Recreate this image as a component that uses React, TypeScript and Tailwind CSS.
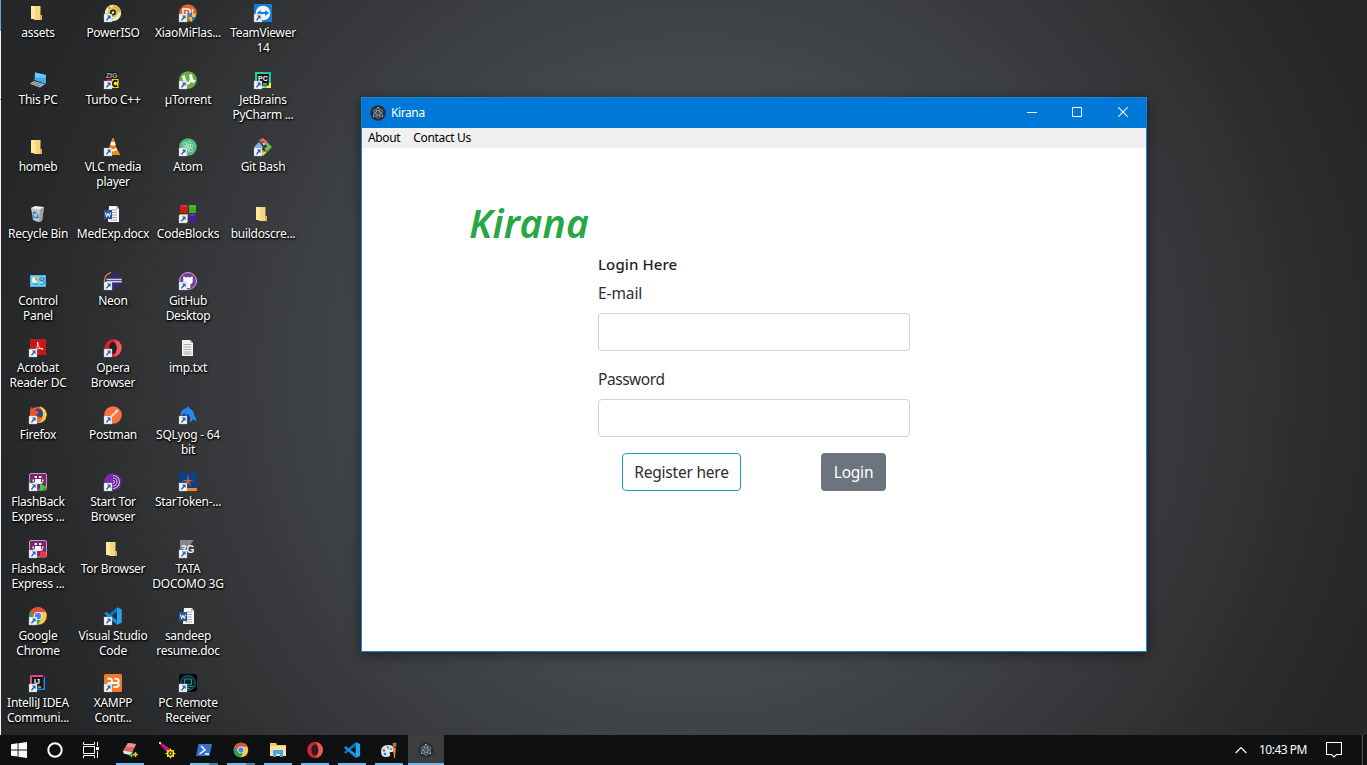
import React from "react";

const FONT = "font-['Noto_Sans','Open_Sans',sans-serif]";

function Svg({ children, size = 18 }: { children?: React.ReactNode; size?: number }) {
  return (
    <svg width={size} height={size} viewBox="0 0 18 18" className="block shrink-0 overflow-visible">
      {children}
    </svg>
  );
}

const Shortcut = () => (
  <g>
    <rect x="0" y="10" width="8" height="8" fill="#f4f6f8" stroke="#9aa4ad" strokeWidth=".4" />
    <path d="M2.9 11.6h3.7v3.7L5.4 14.1 3 16.8 1.9 15.9 4.2 13z" fill="#2b62ad" />
  </g>
);

const Folder = () => (
  <g>
    <path d="M2 2h5v13H2z" fill="#e9c05c" />
    <path d="M7 2h4.5v9l1.5.5V16H6z" fill="#f5d67d" />
    <path d="M2 2h4.5v14L2 14.6z" fill="#ffe8a2" />
    <path d="M11 11h2v5h-2z" fill="#dcb258" />
  </g>
);

const ChromeGlyph = () => (
  <g>
    <circle cx="9" cy="9" r="8.8" fill="#fbc941" />
    <path d="M1.4 4.6A8.8 8.8 0 0 0 8.6 17.8L12.5 11 9 9 5.4 11z" fill="#21a05a" />
    <path d="M1.4 4.6a8.8 8.8 0 0 1 15.4.4H9a4 4 0 0 0-3.9 4.6z" fill="#dc4e41" />
    <circle cx="9" cy="9" r="4.1" fill="#f5f7f8" />
    <circle cx="9" cy="9" r="3.2" fill="#4587ed" />
  </g>
);

const OperaGlyph = () => (
  <g>
    <ellipse cx="9" cy="9" rx="8.4" ry="8.7" fill="#e0202f" />
    <path d="M9 .3a8.7 8.7 0 0 1 0 17.4c5-1.5 5-15.9 0-17.4z" fill="#ef5a5f" />
    <ellipse cx="8.8" cy="9" rx="3.8" ry="6.1" fill="#202224" />
  </g>
);

const CodeGlyph = () => (
  <g>
    <path d="M13 .2 17.8 2.4v13.2L13 17.8z" fill="#27a4ef" />
    <path d="M13 .2v4.6L2.3 13.2.3 11.4z" fill="#0d75bb" />
    <path d="M13 17.8v-4.6L2.3 4.8.3 6.6z" fill="#1590dc" />
  </g>
);

const ElectronGlyph = () => (
  <g>
    <circle cx="9" cy="9" r="8.8" fill="#2b2e3a" />
    <g fill="none" stroke="#8eb1bb" strokeWidth=".7">
      <ellipse cx="9" cy="9" rx="2.3" ry="5.9" />
      <ellipse cx="9" cy="9" rx="2.3" ry="5.9" transform="rotate(60 9 9)" />
      <ellipse cx="9" cy="9" rx="2.3" ry="5.9" transform="rotate(120 9 9)" />
    </g>
    <g fill="#a9c9d1">
      <circle cx="9" cy="9" r=".7" />
      <circle cx="9" cy="3" r=".8" />
      <circle cx="4" cy="12.5" r=".8" />
      <circle cx="14" cy="12.5" r=".8" />
    </g>
  </g>
);

const WordGlyph = () => (
  <g>
    <path d="M5 1h8l2 3v13H4z" fill="#f8f8f8" />
    <path d="m12 1 3 3h-3z" fill="#b9bdc1" />
    <path d="M8 5h5M8 7.5h5M8 10h5M8 12.5h5M6 15h7" stroke="#9aa3af" strokeWidth=".9" />
    <rect x="0" y="5" width="8" height="9" fill="#2a579a" />
    <path d="m1.5 7.5 1.1 4.2L4 8.2l1.3 3.500 1.2-4.2" fill="none" stroke="#fff" strokeWidth="1" />
  </g>
);

const FlashGlyph = () => (
  <g>
    <rect x=".5" y=".5" width="17" height="16.5" rx="1.5" fill="#7b246f" stroke="#d8bfd5" strokeWidth=".8" />
    <rect x="5.6" y="3" width="2.4" height="2" fill="#fff" />
    <rect x="10" y="3" width="2.4" height="2" fill="#fff" />
    <path d="M6 6h6v5H6zM3.5 6.5H5v2H3.5zM13 6.5h1.5v2H13zM4.5 9h9v1.6h-9z" fill="#fff" />
  </g>
);

const icons: Record<string, React.ReactNode> = {
  folder: <Folder />,
  iso: (
    <g>
      <circle cx="9" cy="9" r="8.2" fill="#eee8cf" />
      <path d="M9 .8A8.2 8.2 0 0 1 17 8l-5 1-3-4z" fill="#d9b83c" />
      <path d="M4 2.5 8 6.5" stroke="#c3a12b" strokeWidth="2" />
      <circle cx="9" cy="8.5" r="5" fill="#e1c445" />
      <circle cx="9" cy="8.5" r="3" fill="#1c1c1b" />
      <circle cx="9" cy="8.5" r="1.3" fill="#fbf6dc" />
    </g>
  ),
  mi: (
    <g>
      <circle cx="9" cy="9" r="8.7" fill="#df6434" />
      <path d="M4 12V5h5q2 0 2 2v5M7.5 7v5M13.5 5v7" fill="none" stroke="#fff" strokeWidth="1.4" />
      <path d="M9 9.5q2.5 0 4-1.3 1.8 1.3 4 1.3 0 6-4 8.5-4-2.5-4-8.5" fill="#287fc1" />
      <path d="M13 8.2q1.8 1.3 4 1.3 0 1.8-.5 3.5H13zM9.5 13H13v5q-2.8-1.8-3.5-5" fill="#f5bf38" />
    </g>
  ),
  team: (
    <g>
      <rect width="18" height="18" fill="#137cdb" />
      <circle cx="9" cy="9" r="7.3" fill="#f4f8fc" />
      <path d="m2.8 9 4-3v2h4.4V6l4 3-4 3v-2H6.8v2z" fill="#137cdb" />
    </g>
  ),
  pc: (
    <g>
      <path d="m6 1.5 11 2.6v9L5.5 9z" fill="#44a9ed" />
      <path d="m6 1.5 11 2.6-.5 3L6 6.5z" fill="#70c4f7" />
      <path d="m5 10 11 3.2-5 3.3L.8 12.8z" fill="#aeb9c1" />
      <path d="m4.5 11 8 2.8M3 12.2l8 2.8" stroke="#69747b" strokeWidth=".8" />
    </g>
  ),
  turbo: (
    <g>
      <rect x="1.5" y="1" width="12" height="7" fill="#161616" />
      <text x="7.5" y="7" fontSize="7" fontWeight="700" textAnchor="middle" fill="#aaa" className="font-['Liberation_Sans']">ZIG</text>
      <rect x="3" y="8" width="7" height="9" fill="#e21921" />
      <rect x="8" y="8" width="6.5" height="9" fill="#f7dc24" />
      <path d="M13.2 10.5a2.7 2.7 0 1 0 0 4" fill="none" stroke="#111" strokeWidth="1.7" />
    </g>
  ),
  torrent: (
    <g>
      <circle cx="9" cy="9" r="8.8" fill="#68af45" />
      <path d="M3 5.2 5.8 4q1 7 3.4 7t1-7.2L13 3q.7 6.7 2.8 6l1 .8-2 2q-2 .2-3-1-1 3-3.4 3Q4.7 13 3 5.2" fill="#fff" />
    </g>
  ),
  pycharm: (
    <g>
      <rect x="1" y="1" width="16" height="16" fill="#21d58d" />
      <path d="M10 1h7v8zM12 17h5V9z" fill="#17bfae" />
      <path d="M1 12 12 17H1zM14 12h3v5h-5z" fill="#f1e957" />
      <rect x="3.2" y="3" width="11.5" height="11.5" fill="#111" />
      <text x="4" y="9.5" fontSize="7" fontWeight="700" fill="#fff" className="font-['Liberation_Sans']">PC</text>
      <path d="M9 13h4" stroke="#fff" />
    </g>
  ),
  vlc: (
    <g>
      <path d="m3 12-2.2 5h15.500L14 12z" fill="#f38d13" />
      <path d="m8.4 0-4.500 13q5 3 9.500 0L9.800 0z" fill="#ef7d0d" />
      <path d="m7.3 3.6-1.2 3.5q3 1.4 5.500 0L10.700 3.6q-2 .8-3.400 0M5 10l-.8 2.3q4.800 2.200 9.100 0l-.800-2.200q-4 2-7.500-.1" fill="#f6f5ef" />
    </g>
  ),
  atom: (
    <g>
      <circle cx="9" cy="9" r="8.8" fill="#58ba83" />
      <g fill="none" stroke="#c4efd3" strokeWidth=".7">
        <ellipse cx="9" cy="9" rx="2.1" ry="6" transform="rotate(15 9 9)" />
        <ellipse cx="9" cy="9" rx="2.1" ry="6" transform="rotate(75 9 9)" />
        <ellipse cx="9" cy="9" rx="2.1" ry="6" transform="rotate(135 9 9)" />
      </g>
      <circle cx="9" cy="9" r=".9" fill="#f0fff5" />
    </g>
  ),
  gitbash: (
    <g>
      <path d="m5 2 4-2 5 4-4 4z" fill="#e56563" />
      <path d="m13 4 5 5-5 5-3-4 3-1-2-3z" fill="#72bb55" />
      <path d="M0 9 5 4l4 5-4 6z" fill="#7db4ec" />
      <path d="m9 12 4 2-4 4-3-3z" fill="#ebc94e" />
      <path d="m8 3 5 6M10 7v7" stroke="#32383a" strokeWidth="1" />
      <circle cx="10" cy="6" r="1" fill="#f8eeee" />
    </g>
  ),
  bin: (
    <g>
      <path d="m2 3 13-1-2 14-4 1-5-2z" fill="#d2d5d7" opacity=".92" />
      <path d="m2 3 4-2 9 1-4 2.2z" fill="#f1f2f2" />
      <path d="m11 4.2 4-2.2-2 14-3 1z" fill="#9ba2a7" />
      <path d="m4 9 1.500-2 2 1.500M8.500 9.500l.5 3H6.500M6 13l-2-1.500.2-1.500" fill="none" stroke="#1b87d3" strokeWidth="1.500" />
    </g>
  ),
  word: <WordGlyph />,
  blocks: (
    <g>
      <rect x="1" y="0" width="8" height="8" fill="#c61c1c" />
      <rect x="10" y="0" width="7" height="8" fill="#3eae1c" />
      <rect x="1" y="9" width="8" height="8" fill="#d5bd22" />
      <rect x="10" y="9" width="7" height="8" fill="#421da7" />
      <path d="M2 1h6M11 1h5M11 10h5" stroke="#fff" opacity=".25" />
    </g>
  ),
  control: (
    <g>
      <rect x="1" y="3" width="16" height="12" fill="#45b5ec" />
      <rect x="2" y="4" width="14" height="10" fill="#70cdf6" />
      <circle cx="6" cy="8" r="3" fill="#e8f7fd" />
      <path d="M6 5v3l2.6 1.5A3 3 0 0 0 6 5" fill="#e79c31" />
      <path d="M11 6h4v2h-4zM11 9h4v3h-4M4 12h5" stroke="#257dbd" fill="#bde8fb" />
    </g>
  ),
  neon: (
    <g>
      <path d="M7 .6a8.600 8.600 0 0 0-1 16.400" fill="none" stroke="#ef8c20" strokeWidth="1.300" />
      <circle cx="10" cy="9" r="8" fill="#352a6b" />
      <path d="M2.500 7.500h15.300M2.500 9.800h15.300" stroke="#d0cee5" strokeWidth="1.400" />
    </g>
  ),
  github: (
    <g>
      <circle cx="9" cy="9" r="8.5" fill="#7b3a9f" stroke="#dfd3e5" strokeWidth=".8" />
      <path d="M4.500 4.300 7 5.400q2-.6 4 0l2.500-1.100q.6 1.800.1 3.100.7 4-2.300 4.800v3.800H7v-3.800Q3.500 11.300 4.400 7.400q-.5-1.300.1-3.100" fill="#fff" />
    </g>
  ),
  acrobat: (
    <g>
      <rect x="1" width="16" height="16" fill="#c91719" />
      <path d="M8.8 3q-1 0 .2 3.1t4 4.3q2 .1.4-1-3.3-.3-6.8 1.2-3.6 2-1.5 1.5Q9.5 8 9 4.2z" fill="none" stroke="#fff" strokeWidth=".8" />
    </g>
  ),
  opera: <OperaGlyph />,
  txt: (
    <g>
      <path d="M3 1h8l3 3v13H3z" fill="#f4f4f2" />
      <path d="M11 1v3h3" fill="#babbbc" />
      <path d="M4.500 5.500h8M4.500 8h8M4.500 10.500h8M4.500 13h8M4.500 15h8" stroke="#a8abad" strokeWidth="1" />
    </g>
  ),
  firefox: (
    <g>
      <circle cx="9" cy="9" r="8" fill="#f87521" />
      <path d="M10 0q8 3 7.600 9Q17 17 9 17q5-2 5-8T10 0" fill="#ffc23b" />
      <circle cx="9" cy="7.500" r="5" fill="#264987" />
      <path d="M1 4q1-3 2-3l2 3 4 1 1 2-3 1.500q1 3 5 2.500-3 4-7 3.500Q1 11 1 4" fill="#ee5230" />
      <path d="M11 .3q6.500 3 6.600 8.700l-2.600 4q1-5-1-7.500T11 .3" fill="#ffd54a" />
    </g>
  ),
  postman: (
    <g>
      <circle cx="9" cy="9" r="8.8" fill="#f9733f" />
      <path d="m5.500 12.800 1.500-3.500 5-4.500 1.300 1.300-5 5z" fill="#ffc4a4" />
      <path d="m5 13 7.600-7.300" stroke="#fff" strokeWidth=".9" />
      <circle cx="12.800" cy="5" r="1.300" fill="#fff" />
    </g>
  ),
  dolphin: (
    <path d="M1.500 10Q1.500 3 7.500 2L10 0l.500 2.500q5 2 5 7.500 2 2 2 5.500l-3-2-4 3 .5-4q.5-3-3-4.500L7 10 5.500 7z" fill="#2387fb" />
  ),
  flashPlay: (
    <g><FlashGlyph /><path d="M11 10.500 18 14.200l-7 3.800z" fill="#31d82d" /></g>
  ),
  flashRec: (
    <g><FlashGlyph /><circle cx="14" cy="14.5" r="3.3" fill="#f2353c" /></g>
  ),
  tor: (
    <g>
      <circle cx="9" cy="9" r="8.7" fill="#7f2bb0" />
      <path d="M9 1v16A8 8 0 0 0 9 1" fill="#4f1e77" />
      <path d="M9 2.5a6.5 6.5 0 0 1 0 13M9 5a4 4 0 0 1 0 8M9 7.5a1.5 1.5 0 0 1 0 3" fill="none" stroke="#e1c2ed" strokeWidth="1.1" />
    </g>
  ),
  star: (
    <g>
      <rect width="18" height="18" fill="#0d4086" />
      <path d="m9 1 .8 6 5.200.2-4.800 1.300 2.300 5.500L9 9.800 5 14l2.700-5.300L3 7.200l5-.2z" fill="#e05a32" />
      <rect x="8" y="15" width="10" height="3" fill="#f68a13" />
    </g>
  ),
  docomo: (
    <g>
      <circle cx="9.5" cy="9" r="8" fill="#373a3b" />
      <path d="M1 0h14l-4 5-10 7z" fill="#85898b" />
      <text x="2" y="13" fontSize="11" fontWeight="700" fill="#f0f2f3" textLength="13.5" lengthAdjust="spacingAndGlyphs" className="font-['Liberation_Sans']">3G</text>
    </g>
  ),
  chrome: <ChromeGlyph />,
  code: <CodeGlyph />,
  idea: (
    <g>
      <path d="M1 1h14L9 9z" fill="#f23d81" />
      <path d="M1 1v16l8-6z" fill="#e64f65" />
      <path d="M16 2v14H5z" fill="#2585ec" />
      <rect x="3" y="3" width="11.5" height="11.5" fill="#171518" />
      <text x="5" y="9.7" fontSize="7" fontWeight="700" fill="#fff" className="font-['Liberation_Sans']">IJ</text>
      <path d="M9 13h3" stroke="#fff" />
    </g>
  ),
  xampp: (
    <g>
      <rect width="18" height="18" rx="1.500" fill="#f47828" />
      <path d="M3.500 4.800H6q2 0 2 2.100T6 9q-2.500 0-2.500 2t2.500 2H8M10.500 4.800H12q2.700 0 2.700 2.100T12 9q2.700 0 2.700 2T12 13h-2.500M6 9h6" fill="none" stroke="#fff" strokeWidth="1.900" />
    </g>
  ),
  remote: (
    <g>
      <rect width="18" height="18" rx="3" fill="#020608" />
      <circle cx="9" cy="9" r="7.3" fill="#082126" stroke="#0e7f84" />
      <path d="M5.500 5h7v5.500h-7zM4 12.500h10M7 14.500h4" fill="none" stroke="#1a999f" />
    </g>
  ),
};

type Item = { icon: string; lines: string[]; link?: boolean };
const d = (icon: string, lines: string[], link = true): Item => ({ icon, lines, link });

const columns: Item[][] = [
  [
    d("folder", ["assets"], false),
    d("pc", ["This PC"], false),
    d("folder", ["homeb"], false),
    d("bin", ["Recycle Bin"], false),
    d("control", ["Control", "Panel"], false),
    d("acrobat", ["Acrobat", "Reader DC"]),
    d("firefox", ["Firefox"]),
    d("flashPlay", ["FlashBack", "Express ..."]),
    d("flashRec", ["FlashBack", "Express ..."]),
    d("chrome", ["Google", "Chrome"]),
    d("idea", ["IntelliJ IDEA", "Communi..."]),
  ],
  [
    d("iso", ["PowerISO"]),
    d("turbo", ["Turbo C++"]),
    d("vlc", ["VLC media", "player"]),
    d("word", ["MedExp.docx"], false),
    d("neon", ["Neon"]),
    d("opera", ["Opera", "Browser"]),
    d("postman", ["Postman"]),
    d("tor", ["Start Tor", "Browser"]),
    d("folder", ["Tor Browser"], false),
    d("code", ["Visual Studio", "Code"]),
    d("xampp", ["XAMPP", "Contr..."]),
  ],
  [
    d("mi", ["XiaoMiFlas..."]),
    d("torrent", ["µTorrent"]),
    d("atom", ["Atom"]),
    d("blocks", ["CodeBlocks"]),
    d("github", ["GitHub", "Desktop"]),
    d("txt", ["imp.txt"], false),
    d("dolphin", ["SQLyog - 64", "bit"]),
    d("star", ["StarToken-..."]),
    d("docomo", ["TATA", "DOCOMO 3G"]),
    d("word", ["sandeep", "resume.doc"], false),
    d("remote", ["PC Remote", "Receiver"]),
  ],
  [
    d("team", ["TeamViewer", "14"]),
    d("pycharm", ["JetBrains", "PyCharm ..."]),
    d("gitbash", ["Git Bash"]),
    d("folder", ["buildoscre..."], false),
  ],
];

function DesktopIcon({ item }: { item: Item }) {
  return (
    <div className="flex h-[67px] flex-col items-center pt-1">
      <div className="pr-px">
        <Svg>
          {icons[item.icon]}
          {item.link && <Shortcut />}
        </Svg>
      </div>
      <div className="mt-[3px] pr-px text-center text-[12px] leading-[15px] tracking-[-0.28px] whitespace-nowrap text-white [text-shadow:1px_1px_2px_#000,0_1px_2px_#000]">
        {item.lines.map((line) => (
          <div key={line}>{line}</div>
        ))}
      </div>
    </div>
  );
}

function AppWindow() {
  return (
    <section className="absolute top-[97px] left-[361px] flex h-[555px] w-[786px] flex-col border border-[#1883d7] bg-white shadow-[0_3px_12px_rgba(0,0,0,0.45)]">
      <header className="flex h-[30px] shrink-0 items-center bg-[#0078d7] pl-2 text-white">
        <Svg size={16}><ElectronGlyph /></Svg>
        <span className="ml-[5px] text-[12px] tracking-[-0.4px]">Kirana</span>
        <div className="ml-auto flex h-full pb-[2px]">
          <div className="flex w-[45px] items-center justify-center">
            <svg width="10" height="10"><path d="M0 5.5h10" stroke="#fff" /></svg>
          </div>
          <div className="flex w-[46px] items-center justify-center">
            <svg width="10" height="10"><path d="M.5.5h9v9h-9z" fill="none" stroke="#fff" /></svg>
          </div>
          <div className="flex w-[46px] items-center justify-center">
            <svg width="10" height="10"><path d="m.3.3 9.4 9.4M9.7.3.3 9.7" stroke="#fff" strokeWidth="1.1" /></svg>
          </div>
        </div>
      </header>
      <nav className="flex h-5 shrink-0 items-center gap-[13px] bg-[#f0f0f0] pl-1.5 text-[12px] tracking-[-0.35px] text-black">
        <span>About</span>
        <span>Contact Us</span>
      </nav>
      <main className="flex flex-col text-[#212529]">
        <h1 className="mt-[51px] ml-[107px] h-12 text-[39px] leading-[48px] font-semibold tracking-[0.3px] text-[#28a745] italic">Kirana</h1>
        <form className="ml-[236px] flex w-[312px] flex-col text-[15.5px] leading-6 tracking-[-0.22px]">
          <h2 className="mt-[5px] text-[15px] font-medium tracking-[0.1px]">Login Here</h2>
          <label className="mt-[5px] tracking-[-0.1px] text-[#2b2f33]">E-mail</label>
          <input className="mt-2 h-[38px] rounded border border-[#ced4da] bg-white" />
          <label className="mt-4 tracking-[-0.45px] text-[#2b2f33]">Password</label>
          <input className="mt-2 h-[38px] rounded border border-[#ced4da] bg-white" />
          <div className="mt-4 flex justify-between px-6">
            <button type="button" className="h-[38px] w-[119px] rounded border border-[#17a2b8] whitespace-nowrap text-[#2b2f33]">Register here</button>
            <button type="button" className="h-[38px] w-[65px] rounded bg-[#6c757d] text-white">Login</button>
          </div>
        </form>
      </main>
    </section>
  );
}

type Task = { key: string; glyph: React.ReactNode; state: "idle" | "open" | "multi" | "active" };

const tasks: Task[] = [
  {
    key: "eraser",
    state: "open",
    glyph: (
      <g>
        <path d="M7 2 15 3l-3.500 8L2 9.500z" fill="#d9685d" />
        <path d="m7 2 8 1-1.500 3.500-8.500-1z" fill="#e8948a" />
        <path d="M2 9.500 11.500 11l-1 3.500L2.500 12.500z" fill="#e8e5e3" />
        <path d="M10.500 11.500v5M8 14h5" stroke="#58b348" strokeWidth="1.600" />
        <path d="M14.500 11v5M12 13.500h5" stroke="#efc32c" strokeWidth="1.600" />
      </g>
    ),
  },
  {
    key: "wand",
    state: "idle",
    glyph: (
      <g>
        <path d="m2 2 9 10 2-2z" fill="#ed1184" stroke="#ed1184" strokeWidth="2" />
        <path d="m3 3 8 8" stroke="#5d16a0" />
        <rect x="1" y="1" width="2" height="2" fill="#ffe91e" />
        <circle cx="12.5" cy="12.5" r="3" fill="#2b2904" stroke="#ffe91e" strokeWidth="1.5" />
        <path d="M12.5 7.5v2M12.5 15.5v2M7.5 12.5h2M15.5 12.5h2M9 9l1.3 1.3M16 16l-1.3-1.3M16 9l-1.3 1.3M9 16l1.3-1.3" stroke="#ffe91e" />
        <circle cx="12.5" cy="12.5" r="1" fill="#ffe91e" />
      </g>
    ),
  },
  {
    key: "powershell",
    state: "multi",
    glyph: (
      <g>
        <path d="M3.5 3H17l-2.5 12H1z" fill="#3770c9" />
        <path d="m6 5 4 4-5.5 4M10 13h4" fill="none" stroke="#fff" strokeWidth="1.5" />
      </g>
    ),
  },
  { key: "chrome", state: "multi", glyph: <g transform="translate(1.5 1.5) scale(.83)"><ChromeGlyph /></g> },
  {
    key: "explorer",
    state: "open",
    glyph: (
      <g>
        <path d="M1 2h6l1 2h9v11H1z" fill="#f0c965" />
        <path d="M1 5h16v10H1z" fill="#ffe29a" />
        <path d="M4 9h10v7h-3v-3H7v3H4z" fill="#39aee8" />
      </g>
    ),
  },
  { key: "opera", state: "open", glyph: <g transform="translate(.7 .7) scale(.92)"><OperaGlyph /></g> },
  { key: "code", state: "open", glyph: <g transform="translate(.7 .7) scale(.92)"><CodeGlyph /></g> },
  {
    key: "paint",
    state: "open",
    glyph: (
      <g>
        <path d="M1 11q0-7 7-7 6 0 6 5 0 2-3 2-2 0-1 2 1 3-4 3-5 0-5-5" fill="#dbe7ef" />
        <circle cx="4" cy="9.500" r="1.300" fill="#d94e3f" />
        <circle cx="8" cy="6.5" r="1.300" fill="#45a957" />
        <circle cx="5" cy="13" r="1.300" fill="#2583c5" />
        <circle cx="11" cy="8" r="1.100" fill="#7461b8" />
        <path d="m12.500 2 4-.5-.5 5h-3z" fill="#b76e36" />
        <path d="M13 7h2.800L15 17h-1z" fill="#f28a26" />
      </g>
    ),
  },
  { key: "electron", state: "active", glyph: <g transform="translate(1 1) scale(.89)"><ElectronGlyph /></g> },
];

function Taskbar() {
  return (
    <footer className="flex h-[30px] w-full bg-[#0f1011] text-white">
      <div className="flex w-[37px] items-center justify-center">
        <svg width="16" height="16" fill="#fff"><path d="M0 2.2 6.6 1.3v6.2H0zM7.5 1.2 16 0v7.5H7.5zM0 8.4h6.6v6.2L0 13.7zM7.5 8.4H16V16l-8.5-1.2z" /></svg>
      </div>
      <div className="flex w-9 items-center justify-center">
        <svg width="16" height="16"><circle cx="8" cy="8" r="6.7" fill="none" stroke="#fff" strokeWidth="2" /></svg>
      </div>
      <div className="flex w-[39px] items-center justify-center pr-0.5">
        <svg width="17" height="16" fill="none" stroke="#fff">
          <path d="M.5 0v2.5h11V0M.5 16v-2.5h11V16M.5 4.5h11v7H.5zM14.5 0v4M14.5 9v7" />
          <path d="M13 6.5h3" strokeWidth="3" />
        </svg>
      </div>
      <div className="flex gap-px">
        {tasks.map((t) => (
          <div key={t.key} className={t.state === "active" ? "flex w-9 flex-col items-center bg-[#3c3e3e]" : "flex w-9 flex-col items-center"}>
            <div className="flex h-7 items-center pt-[2px]"><Svg>{t.glyph}</Svg></div>
            {t.state === "open" && <div className="h-0.5 w-7 bg-[#76b9ed]" />}
            {t.state === "active" && <div className="h-0.5 w-9 bg-[#76b9ed]" />}
            {t.state === "multi" && (
              <div className="flex h-0.5 w-7">
                <div className="w-[19px] bg-[#76b9ed]" />
                <div className="grow bg-[#4f7ca1]" />
              </div>
            )}
          </div>
        ))}
      </div>
      <div className="ml-auto flex items-center">
        <svg width="12" height="8"><path d="m.7 7 5.3-5.5L11.3 7" fill="none" stroke="#fff" strokeWidth="1.2" /></svg>
        <span className="ml-3 w-[48px] text-[12px] tracking-[-0.5px] whitespace-nowrap">10:43 PM</span>
        <svg width="16" height="16" className="ml-[19px]"><path d="M.5.5h15v12h-5L8 15l-2.5-2.5h-5z" fill="none" stroke="#fff" strokeWidth="1.1" /></svg>
        <div className="ml-5 h-full w-px bg-[#56585a]" />
        <div className="w-1" />
      </div>
    </footer>
  );
}

export default function App() {
  return (
    <div className={`relative flex h-[765px] w-[1367px] flex-col overflow-hidden bg-[radial-gradient(circle_at_695px_375px,#4b5053_0px,#474b4e_260px,#3d4042_400px,#323436_540px,#292b2c_640px,#252728_710px)] ${FONT}`}>
      <div className="flex h-[735px]">
        <div className="flex w-px flex-col bg-[#f2f4f5]">
          <div className="h-[31px] bg-[#5da9e4]" />
          <div className="mt-[68px] h-px bg-[#8a8d90]" />
        </div>
        {columns.map((col, i) => (
          <div key={i} className="w-[75px]">
            {col.map((item, j) => (
              <DesktopIcon key={j} item={item} />
            ))}
          </div>
        ))}
      </div>
      <AppWindow />
      <Taskbar />
    </div>
  );
}
